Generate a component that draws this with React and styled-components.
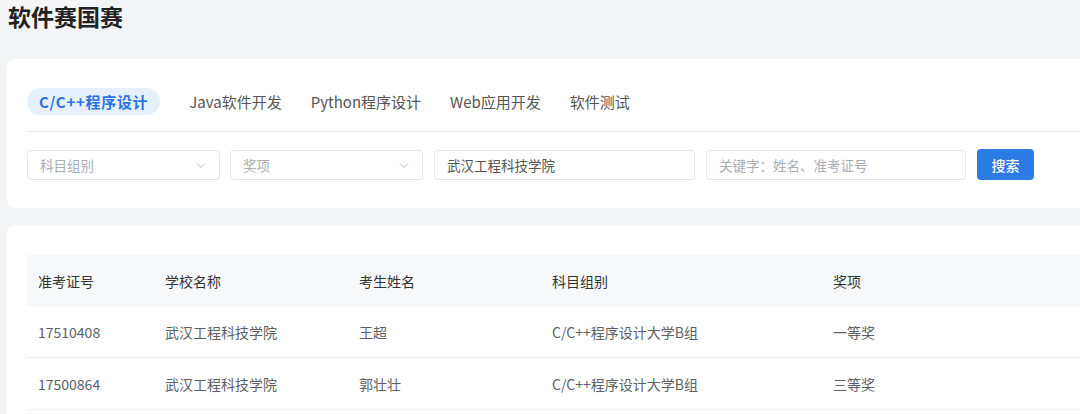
import styled, { createGlobalStyle } from "styled-components";

const GlobalStyle = createGlobalStyle`
  body {
    margin: 0;
    background: #f3f4f6;
    font-family: "Noto Sans CJK SC", "Noto Sans", sans-serif;
  }
`;

const Page = styled.div`
  padding: 0 0 0 7px;
  width: 1120px;
`;

const Title = styled.h1`
  margin: 0 0 27px 1px;
  font-size: 23px;
  line-height: 32px;
  font-weight: 700;
  color: #222;
`;

const Card = styled.div`
  background: #fff;
  border-radius: 8px;
  padding: ${(props) => props.padding};
  margin-bottom: ${(props) => props.gap || "0"};
`;

const Tabs = styled.div`
  display: flex;
  align-items: center;
  gap: 5px;
  padding-bottom: 16px;
  border-bottom: 1px solid #ebedf0;
`;

const Tab = styled.div`
  height: 27px;
  line-height: 27px;
  padding: 0 12px;
  border-radius: 14px;
  font-size: 15px;
  cursor: pointer;
  color: ${(props) => (props.active ? "#2a74dd" : "#555")};
  font-weight: ${(props) => (props.active ? 700 : 400)};
  letter-spacing: ${(props) => (props.active ? "0.7px" : "0")};
  margin-right: ${(props) => (props.active ? "12px" : "0")};
  background: ${(props) => (props.active ? "#e6f0fc" : "transparent")};
`;

const Filters = styled.div`
  display: flex;
  align-items: center;
  margin-top: 17px;
`;

const Field = styled.div`
  box-sizing: border-box;
  width: ${(props) => props.width}px;
  margin-right: ${(props) => props.space || 11}px;
  height: 30px;
  padding: 0 12px;
  border: 1px solid #e3e5e9;
  border-radius: 4px;
  display: flex;
  align-items: center;
  justify-content: space-between;
  font-size: 13.5px;
  color: ${(props) => (props.filled ? "#555" : "#aaadb3")};
`;

const Chevron = () => (
  <svg width="12" height="12" viewBox="0 0 12 12" fill="none">
    <path d="M2 4.5 6 8.5 10 4.5" stroke="#b8bbc1" strokeWidth="1" />
  </svg>
);

const SearchButton = styled.button`
  width: 57px;
  height: 31px;
  border: none;
  border-radius: 4px;
  background: #2d7be5;
  color: #fff;
  font-family: inherit;
  font-size: 14px;
  font-weight: 500;
  cursor: pointer;
`;

const Table = styled.table`
  width: 100%;
  table-layout: fixed;
  border-collapse: collapse;
  font-size: 14px;
`;

const Th = styled.th`
  box-sizing: border-box;
  text-align: left;
  font-weight: 400;
  color: #333;
  height: 51px;
  padding: 0 11px;
  background: #f7f8f9;
  width: ${(props) => (props.width ? props.width + "px" : "auto")};
`;

const Td = styled.td`
  height: 51px;
  padding: 0 11px;
  color: #5c5f66;
  border-bottom: 1px solid #ebedf0;
`;

const tabs = ["C/C++程序设计", "Java软件开发", "Python程序设计", "Web应用开发", "软件测试"];

const columns = [
  { title: "准考证号", width: 127 },
  { title: "学校名称", width: 194 },
  { title: "考生姓名", width: 193 },
  { title: "科目组别", width: 281 },
  { title: "奖项" },
];

const rows = [
  ["17510408", "武汉工程科技学院", "王超", "C/C++程序设计大学B组", "一等奖"],
  ["17500864", "武汉工程科技学院", "郭壮壮", "C/C++程序设计大学B组", "三等奖"],
];

export default function App() {
  return (
    <Page>
      <GlobalStyle />
      <Title>软件赛国赛</Title>
      <Card padding="29px 20px 28px" gap="17px">
        <Tabs>
          {tabs.map((t, i) => (
            <Tab key={t} active={i === 0}>
              {t}
            </Tab>
          ))}
        </Tabs>
        <Filters>
          <Field width={193} space={10}>
            科目组别
            <Chevron />
          </Field>
          <Field width={193}>
            奖项
            <Chevron />
          </Field>
          <Field width={261} filled>
            武汉工程科技学院
          </Field>
          <Field width={260}>
            关键字：姓名、准考证号
          </Field>
          <SearchButton>搜索</SearchButton>
        </Filters>
      </Card>
      <Card padding="30px 20px">
        <Table>
          <thead>
            <tr>
              {columns.map((c) => (
                <Th key={c.title} width={c.width}>
                  {c.title}
                </Th>
              ))}
            </tr>
          </thead>
          <tbody>
            {rows.map((r) => (
              <tr key={r[0]}>
                {r.map((cell, i) => (
                  <Td key={i}>{cell}</Td>
                ))}
              </tr>
            ))}
          </tbody>
        </Table>
      </Card>
    </Page>
  );
}
